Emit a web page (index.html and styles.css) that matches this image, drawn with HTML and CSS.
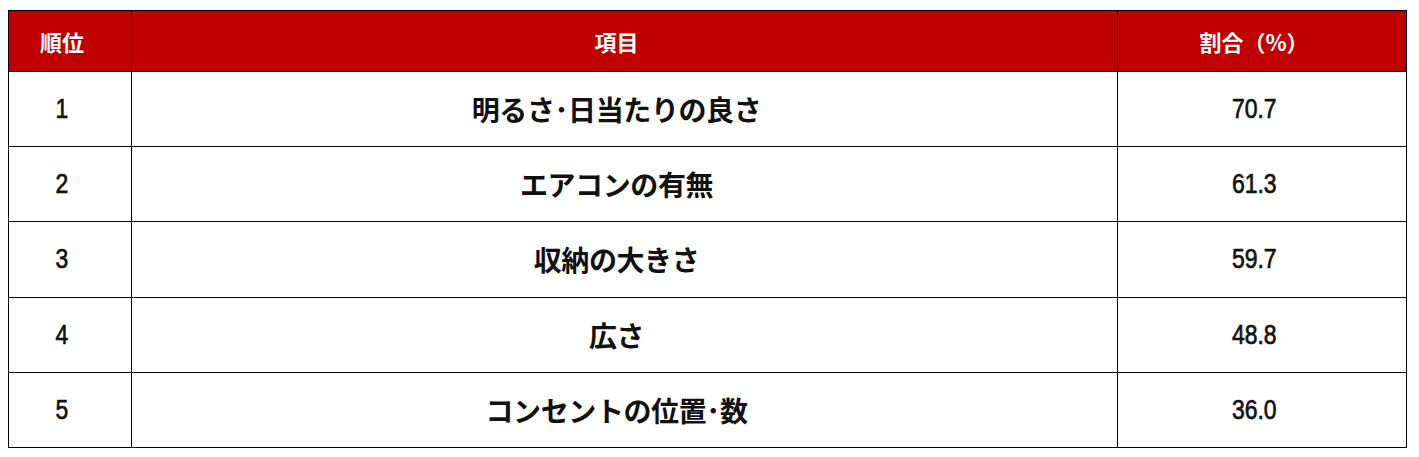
FILE: index.html
```html
<!DOCTYPE html>
<html lang="ja">
<head>
<meta charset="utf-8">
<title>ランキング</title>
<link rel="stylesheet" href="styles.css">
</head>
<body>
<table class="rank-table">
  <colgroup>
    <col class="col-rank">
    <col class="col-item">
    <col class="col-rate">
  </colgroup>
  <thead>
    <tr class="head-row">
      <th>順位</th>
      <th>項目</th>
      <th>割合（%）</th>
    </tr>
  </thead>
  <tbody>
    <tr class="body-row"><td class="num"><span class="digits">1</span></td><td class="item">明るさ･日当たりの良さ</td><td class="num"><span class="digits">70.7</span></td></tr>
    <tr class="body-row"><td class="num"><span class="digits">2</span></td><td class="item">エアコンの有無</td><td class="num"><span class="digits">61.3</span></td></tr>
    <tr class="body-row"><td class="num"><span class="digits">3</span></td><td class="item">収納の大きさ</td><td class="num"><span class="digits">59.7</span></td></tr>
    <tr class="body-row"><td class="num"><span class="digits">4</span></td><td class="item">広さ</td><td class="num"><span class="digits">48.8</span></td></tr>
    <tr class="body-row"><td class="num"><span class="digits">5</span></td><td class="item">コンセントの位置･数</td><td class="num"><span class="digits">36.0</span></td></tr>
  </tbody>
</table>
</body>
</html>
```
FILE: styles.css
```css
html, body {
  background: #ffffff;
}
body {
  margin: 10px 0 0 8px;
  font-family: "Noto Sans CJK JP", "Noto Sans", sans-serif;
  color: #111111;
}
.rank-table {
  width: 1398px;
  border-collapse: collapse;
  table-layout: fixed;
}
.col-rank { width: 123px; }
.col-item { width: 986px; }
.col-rate { width: 289px; }

.rank-table th,
.rank-table td {
  border: 1px solid #000000;
  text-align: center;
  vertical-align: middle;
  padding: 0 16px 0 0;
}
.head-row th {
  height: 60px;
  background: #c00000;
  color: #ffffff;
  font-size: 22px;
  font-weight: 700;
  line-height: 1;
}
.body-row td {
  height: 74.2px;
  line-height: 1;
}
.item {
  font-size: 28px;
  font-weight: 700;
  letter-spacing: -0.4px;
}
.num {
  font-family: "Liberation Sans", Arial, sans-serif;
  font-size: 28px;
  font-weight: 400;
}
.digits {
  display: inline-block;
  transform: scaleX(0.82);
  -webkit-text-stroke: 0.7px #111111;
}
```
